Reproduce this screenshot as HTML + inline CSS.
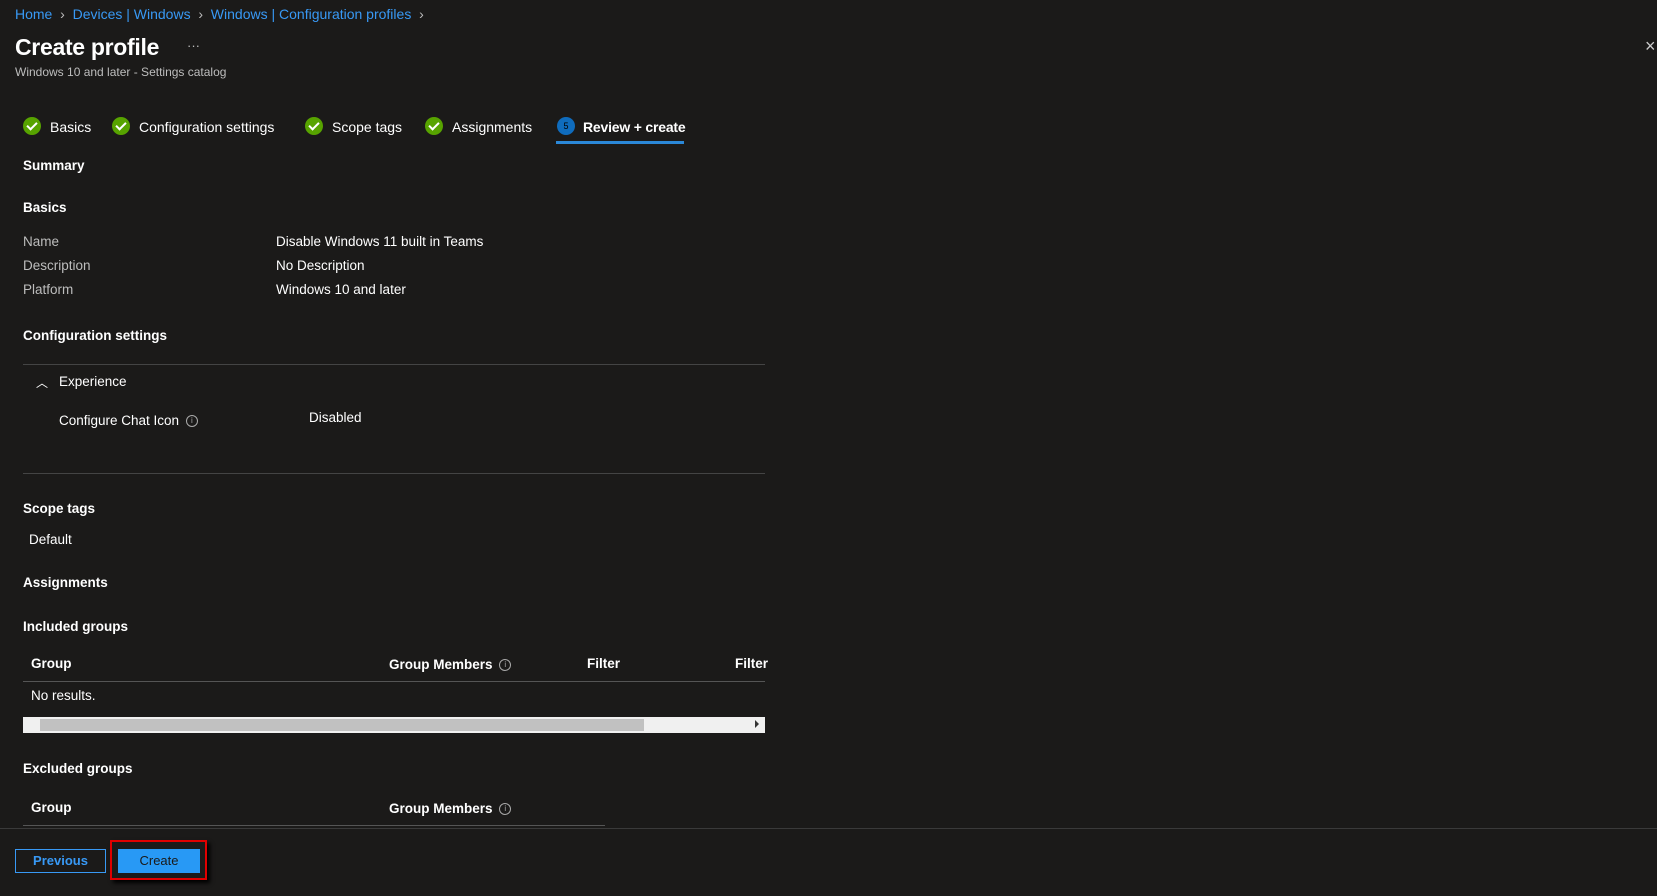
<!DOCTYPE html><html><head><style>
body{margin:0;width:1657px;height:896px;background:#1b1a19;font-family:"Liberation Sans",sans-serif;color:#fff;position:relative;overflow:hidden;font-size:13.5px}
.a{position:absolute;white-space:nowrap}
.l{color:#3899f5}
.g{color:#bdbdbd}
.b{font-weight:bold}
.chk{position:absolute;width:18px;height:18px;border-radius:50%;background:#57a300}
.chk:after{content:"";position:absolute;left:6px;top:3px;width:4px;height:8px;border:solid #fff;border-width:0 2px 2px 0;transform:rotate(45deg)}
.hr{position:absolute;height:1px;background:#444}
.i{display:inline-block;width:10px;height:10px;border:1px solid #aaa;border-radius:50%;font-size:8px;text-align:center;line-height:10px;color:#aaa;vertical-align:middle;margin-left:3px}
</style></head><body>
<div class="a l" style="left:15px;top:6px;font-size:14px">Home <span class="g">&nbsp;›&nbsp;</span> Devices | Windows <span class="g">&nbsp;›&nbsp;</span> Windows | Configuration profiles <span class="g">&nbsp;›</span></div>
<div class="a b" style="left:15px;top:34px;font-size:23px;letter-spacing:-0.3px">Create profile</div>
<div class="a g" style="left:187px;top:38px;font-size:13px">···</div>
<div class="a g" style="left:15px;top:65px;font-size:12px">Windows 10 and later - Settings catalog</div>
<div class="a" style="left:1645px;top:36px;font-size:18px;color:#ccc">×</div>
<div class="chk" style="left:23px;top:117px"></div><div class="a" style="left:50px;top:119px;font-size:14px">Basics</div>
<div class="chk" style="left:112px;top:117px"></div><div class="a" style="left:139px;top:119px;font-size:14px">Configuration settings</div>
<div class="chk" style="left:305px;top:117px"></div><div class="a" style="left:332px;top:119px;font-size:14px">Scope tags</div>
<div class="chk" style="left:425px;top:117px"></div><div class="a" style="left:452px;top:119px;font-size:14px">Assignments</div>
<div class="a" style="left:557px;top:117px;width:18px;height:18px;border-radius:50%;background:#0f6cbd;font-size:9px;text-align:center;line-height:18px;color:#000">5</div>
<div class="a b" style="left:583px;top:119px;font-size:14px;letter-spacing:-0.2px">Review + create</div>
<div class="a" style="left:556px;top:141px;width:128px;height:3px;background:#2b88d8"></div>
<div class="a b" style="left:23px;top:158px">Summary</div>
<div class="a b" style="left:23px;top:200px">Basics</div>
<div class="a g" style="left:23px;top:234px">Name</div><div class="a" style="left:276px;top:234px">Disable Windows 11 built in Teams</div>
<div class="a g" style="left:23px;top:258px">Description</div><div class="a" style="left:276px;top:258px">No Description</div>
<div class="a g" style="left:23px;top:282px">Platform</div><div class="a" style="left:276px;top:282px">Windows 10 and later</div>
<div class="a b" style="left:23px;top:328px">Configuration settings</div>
<div class="hr" style="left:23px;top:364px;width:742px"></div>
<div class="a" style="left:36px;top:374px;font-size:12px">︿</div>
<div class="a" style="left:59px;top:374px">Experience</div>
<div class="a" style="left:59px;top:413px">Configure Chat Icon <span class="i">i</span></div>
<div class="a" style="left:309px;top:410px">Disabled</div>
<div class="hr" style="left:23px;top:473px;width:742px"></div>
<div class="a b" style="left:23px;top:501px">Scope tags</div>
<div class="a" style="left:29px;top:532px">Default</div>
<div class="a b" style="left:23px;top:575px">Assignments</div>
<div class="a b" style="left:23px;top:619px">Included groups</div>
<div class="a b" style="left:31px;top:656px">Group</div>
<div class="a b" style="left:389px;top:657px">Group Members <span class="i" style="font-weight:normal">i</span></div>
<div class="a b" style="left:587px;top:656px">Filter</div>
<div class="a b" style="left:735px;top:656px">Filter</div>
<div class="hr" style="left:23px;top:681px;width:742px;background:#555"></div>
<div class="a" style="left:31px;top:688px">No results.</div>
<div class="a" style="left:23px;top:717px;width:742px;height:16px;background:#f0f0f0"></div>
<div class="a" style="left:40px;top:719px;width:604px;height:12px;background:#c1c1c1"></div>
<div class="a" style="left:755px;top:720px;width:0;height:0;border:4px solid transparent;border-left-color:#333;border-right:0"></div>
<div class="a b" style="left:23px;top:761px">Excluded groups</div>
<div class="a b" style="left:31px;top:800px">Group</div>
<div class="a b" style="left:389px;top:801px">Group Members <span class="i" style="font-weight:normal">i</span></div>
<div class="hr" style="left:23px;top:825px;width:582px;background:#555"></div>
<div class="hr" style="left:0;top:828px;width:1657px;background:#3a3a3a"></div>
<div class="a" style="left:15px;top:849px;width:89px;height:22px;border:1px solid #3899f5;color:#3899f5;font-weight:bold;text-align:center;line-height:22px;font-size:13px">Previous</div>
<div class="a" style="left:110px;top:840px;width:93px;height:36px;border:2px solid #e00000;box-shadow:3px 3px 4px #000"></div>
<div class="a" style="left:118px;top:849px;width:82px;height:24px;background:#2899f5;color:#1b1a19;text-align:center;line-height:24px;font-size:13px">Create</div>
</body></html>
